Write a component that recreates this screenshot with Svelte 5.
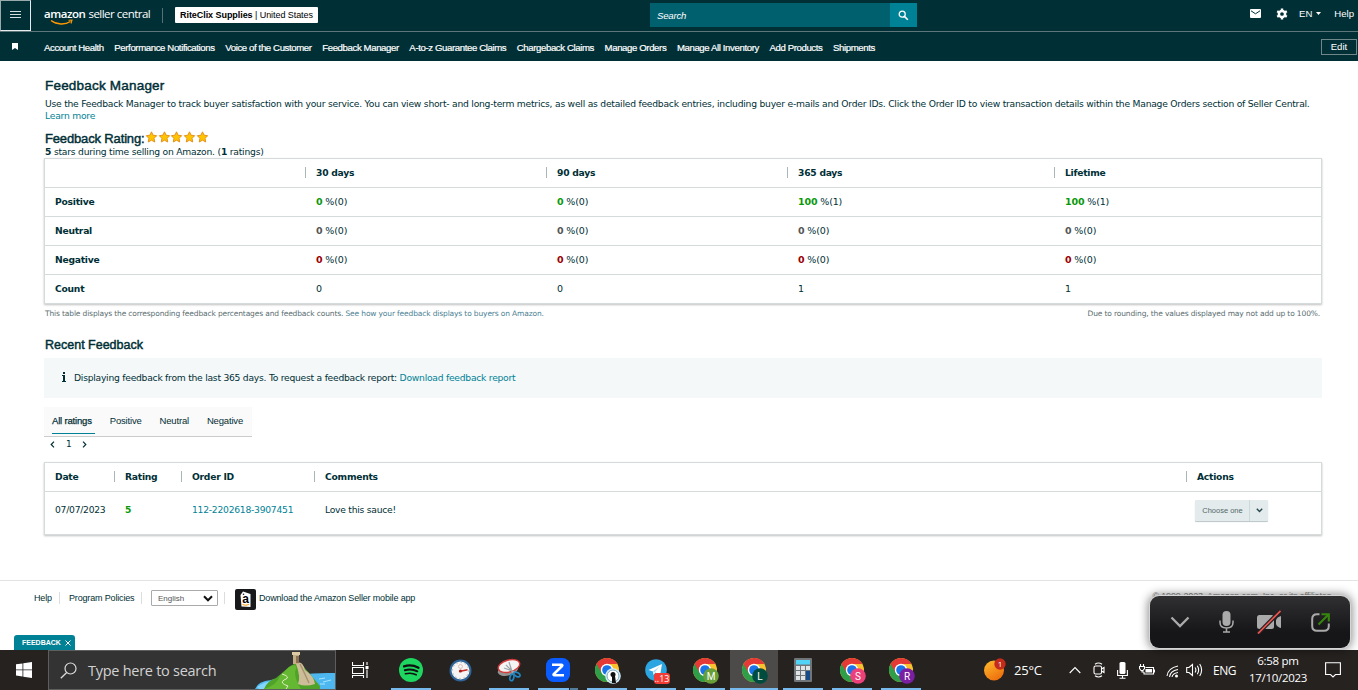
<script lang="ts">
	type Metric = { label: string; tone: string; values: [string, string][] };

	const quickLinks = [
		'Account Health',
		'Performance Notifications',
		'Voice of the Customer',
		'Feedback Manager',
		'A-to-z Guarantee Claims',
		'Chargeback Claims',
		'Manage Orders',
		'Manage All Inventory',
		'Add Products',
		'Shipments'
	];

	const periods = ['30 days', '90 days', '365 days', 'Lifetime'];

	const metrics: Metric[] = [
		{ label: 'Positive', tone: 'good', values: [['0', '0'], ['0', '0'], ['100', '1'], ['100', '1']] },
		{ label: 'Neutral', tone: 'flat', values: [['0', '0'], ['0', '0'], ['0', '0'], ['0', '0']] },
		{ label: 'Negative', tone: 'bad', values: [['0', '0'], ['0', '0'], ['0', '0'], ['0', '0']] }
	];
	const counts = [0, 0, 1, 1];

	const tabs = ['All ratings', 'Positive', 'Neutral', 'Negative'];
	let activeTab = $state('All ratings');

	// Taskbar buttons, left to right
	const apps = [
		{ kind: 'tasks', open: false },
		{ kind: 'spotify', open: true },
		{ kind: 'clock', open: false },
		{ kind: 'snip', open: true },
		{ kind: 'zoom', open: true, stacked: true },
		{ kind: 'chrome', open: true, badge: '', color: '#d7eef7' },
		{ kind: 'telegram', open: true },
		{ kind: 'chrome', open: true, badge: 'M', color: '#689f38' },
		{ kind: 'chrome', open: true, badge: 'L', color: '#004d40', active: true },
		{ kind: 'calc', open: true },
		{ kind: 'chrome', open: true, badge: 'S', color: '#ec407a' },
		{ kind: 'chrome', open: true, badge: 'R', color: '#7b1fa2' }
	];
</script>

{#snippet chrome(badge: string, color: string)}
	<svg width="30" height="28" viewBox="0 0 30 28">
		<circle cx="13" cy="13" r="12" fill="#fbc02d" />
		<path d="M2.6 7A12 12 0 0 0 13 25L18.2 16L13 13Z" fill="#2e9e48" />
		<path d="M2.6 7A12 12 0 0 1 23.4 7H13L7.8 16Z" fill="#e53935" />
		<circle cx="13" cy="13" r="6.2" fill="#fff" />
		<circle cx="13" cy="13" r="4.8" fill="#1a73e8" />
		<circle cx="19" cy="19" r="7.800" fill={color} />
		{#if badge}
			<text x="19" y="22.500" text-anchor="middle" class="badge-letter">{badge}</text>
		{:else}
			<circle cx="19" cy="19" r="6" fill="#fff" stroke="#78aabb" />
			<circle cx="19" cy="17.500" r="2.500" fill="#111" />
			<path d="M18 19h3l1 7h-4z" fill="#111" />
		{/if}
	</svg>
{/snippet}

<div class="screen">
	<header>
		<div class="topbar">
			<button class="menu" aria-label="Menu">
				<svg width="11" height="8" viewBox="0 0 11 8">
					<path d="M0 1.500h11M0 4.500h11M0 7.500h11" stroke="#d5dfe0" stroke-width="1" />
				</svg>
			</button>
			<div class="logo">
				<b>amazon</b><span>seller central</span>
				<svg class="smile" width="24" height="7" viewBox="0 0 24 7">
					<path d="M1 1.500C7 6 15 6 20.500 2.500" fill="none" stroke="#f90" stroke-width="1.400" />
					<path d="M18.500 1.200L22 1L21 4.500" fill="none" stroke="#f90" stroke-width="1.100" />
				</svg>
			</div>
			<div class="account"><b>RiteClix Supplies</b> | United States</div>
			<div class="search">
				<span>Search</span>
				<button aria-label="Search">
					<svg width="11" height="11" viewBox="0 0 11 11">
						<circle cx="4.200" cy="4.200" r="3" fill="none" stroke="#fff" stroke-width="1.300" />
						<path d="M6.400 6.400L9.800 9.800" stroke="#fff" stroke-width="1.600" />
					</svg>
				</button>
			</div>
			<div class="tools">
				<svg width="11" height="9" viewBox="0 0 11 9">
					<rect width="11" height="9" rx="1" fill="#fff" />
					<path d="M1 1.800L5.500 4.800L10 1.800" fill="none" stroke="#002f36" />
				</svg>
				<svg class="gear" width="12" height="12" viewBox="0 0 12 12">
					<circle cx="6" cy="6" r="3.100" fill="none" stroke="#fff" stroke-width="2.500" />
					<path
						d="M6 .5V3M6 9v2.500M1.200 3.200L3.400 4.500M8.600 7.500l2.200 1.300M1.200 8.800L3.400 7.500M8.600 4.500l2.200-1.300"
						stroke="#fff"
						stroke-width="2.400"
					/>
				</svg>
				<span class="lang">EN</span>
				<svg class="caret" width="5" height="3" viewBox="0 0 5 3"><path d="M0 0h5L2.500 3z" fill="#fff" /></svg>
				<span class="help">Help</span>
			</div>
		</div>
		<nav>
			<svg class="bookmark" width="6" height="7" viewBox="0 0 6 7"><path d="M0 0h6v7L3 5L0 7z" fill="#fff" /></svg>
			<div class="links">
				{#each quickLinks as link}
					<span>{link}</span>
				{/each}
			</div>
			<button class="edit">Edit</button>
		</nav>
	</header>

	<main>
		<h1>Feedback Manager</h1>
		<p class="intro">
			<span>Use the Feedback Manager to track buyer satisfaction with your service. You can view short- and long-term metrics, as well as detailed feedback entries, including buyer e-mails and Order IDs. Click the Order ID to view transaction details within the Manage Orders section of Seller Central.</span>
			<a href="#learn">Learn more</a>
		</p>
		<div class="rating">
			<h2>Feedback Rating:</h2>
			{#each Array(5) as _}
				<svg width="12.700" height="12" viewBox="0 0 12.700 12">
					<path
						d="M6.500 .8L8.100 4.200L11.700 4.700L9.100 7.300L9.700 11L6.500 9.200L3.300 11L3.900 7.300L1.300 4.700L4.900 4.200Z"
						fill="#ffc400"
						stroke="#e18a13"
						stroke-width=".9"
					/>
				</svg>
			{/each}
		</div>
		<p class="summary"><b>5</b> stars during time selling on Amazon. (<b>1</b> ratings)</p>

		<div class="table metrics">
			<div class="row head">
				<span></span>
				{#each periods as period}
					<span class="split">{period}</span>
				{/each}
			</div>
			{#each metrics as metric}
				<div class="row">
					<b>{metric.label}</b>
					{#each metric.values as [percent, count]}
						<span class="cell"><b class={metric.tone}>{percent}</b> %({count})</span>
					{/each}
				</div>
			{/each}
			<div class="row">
				<b>Count</b>
				{#each counts as count}
					<span class="cell">{count}</span>
				{/each}
			</div>
		</div>
		<div class="notes">
			<span>This table displays the corresponding feedback percentages and feedback counts. <a href="#display">See how your feedback displays to buyers on Amazon.</a></span>
			<span>Due to rounding, the values displayed may not add up to 100%.</span>
		</div>

		<h2 class="recent">Recent Feedback</h2>
		<div class="info">
			<svg width="4" height="10" viewBox="0 0 4 10">
				<path d="M1 0h2v2H1zM0 3h3v6h1v1H0V9h1V4H0z" fill="#002f36" />
			</svg>
			<span>Displaying feedback from the last 365 days. To request a feedback report: <a href="#report">Download feedback report</a></span>
		</div>

		<div class="tabs">
			{#each tabs as tab}
				<button class:active={tab === activeTab} onclick={() => (activeTab = tab)}>{tab}</button>
			{/each}
		</div>
		<div class="pager">
			<svg width="5" height="7" viewBox="0 0 5 7"><path d="M4 .7L1.200 3.500L4 6.300" fill="none" stroke="#002f36" stroke-width="1.200" /></svg>
			<span>1</span>
			<svg width="5" height="7" viewBox="0 0 5 7"><path d="M1 .7L3.800 3.500L1 6.300" fill="none" stroke="#002f36" stroke-width="1.200" /></svg>
		</div>

		<div class="table entries">
			<div class="row head">
				<span>Date</span>
				<span class="split">Rating</span>
				<span class="split">Order ID</span>
				<span class="split">Comments</span>
				<span class="split">Actions</span>
			</div>
			<div class="row entry">
				<span>07/07/2023</span>
				<span class="cell"><b class="good">5</b></span>
				<span class="cell"><a href="#order">112-2202618-3907451</a></span>
				<span class="cell">Love this sauce!</span>
				<div class="cell">
					<button class="choose">
						<span>Choose one</span>
						<i><svg width="7" height="5" viewBox="0 0 7 5"><path d="M.8 .8L3.500 3.600L6.200 .8" fill="none" stroke="#24474d" stroke-width="1.400" /></svg></i>
					</button>
				</div>
			</div>
		</div>
	</main>

	<footer>
		<span class="f-help">Help</span>
		<span class="f-policy">Program Policies</span>
		<div class="f-lang">
			<div class="select">
				English
				<svg width="10" height="7" viewBox="0 0 10 7"><path d="M1 1.300L5 5.300L9 1.300" fill="none" stroke="#111" stroke-width="2" /></svg>
			</div>
		</div>
		<div class="f-app">
			<svg width="21" height="21" viewBox="0 0 21 21">
				<rect width="21" height="21" rx="2" fill="#17191a" />
				<path d="M5.500 6L8 2.500L15.500 5V18L6.500 17.500Z" fill="#fff" />
				<circle cx="8.500" cy="5.200" r=".8" fill="#17191a" />
				<text x="10.500" y="14" text-anchor="middle" class="app-letter">a</text>
				<path d="M7.500 15.500Q10.500 17 14 15.500" fill="none" stroke="#f90" />
			</svg>
			<span>Download the Amazon Seller mobile app</span>
		</div>
		<small>© 1999-2023, Amazon.com, Inc. or its affiliates</small>
	</footer>
	<div class="feedback-tab">
		<b>FEEDBACK</b>
		<svg width="6" height="6" viewBox="0 0 6 6"><path d="M.5 .5l5 5M5.500 .5l-5 5" stroke="#fff" /></svg>
	</div>

	<div class="taskbar">
		<div class="start">
			<svg width="16" height="16" viewBox="0 0 16 16">
				<path d="M0 2.300L6.500 1.400V7.500H0zM7.300 1.300L16 0V7.500H7.300zM0 8.300H6.500V14.500L0 13.600zM7.300 8.300H16V16L7.300 14.700z" fill="#fff" />
			</svg>
		</div>
		<div class="winsearch">
			<svg width="17" height="17" viewBox="0 0 17 17">
				<circle cx="10.500" cy="6.500" r="5.500" fill="none" stroke="#ddd" stroke-width="1.200" />
				<path d="M6.700 10.500L.8 16.200" stroke="#ddd" stroke-width="1.300" />
			</svg>
			<span>Type here to search</span>
			<svg class="island" width="80" height="37" viewBox="0 0 80 37">
				<path d="M0 37Q3 29 16 28Q46 20 80 21V37Z" fill="#4db8f0" />
				<path d="M2 35Q9 29 20 29L30 37H4Z" fill="#82d5fb" />
				<path d="M9 37Q12 29 21 26L34 15Q41 9 47 13L55 22L65 34V37Z" fill="#50a328" />
				<path d="M9 37Q22 33 25 24L34 15Q44 10 40 20Q40 28 46 37Z" fill="#65b831" />
				<path d="M41 12Q47 7 50 18Q59 24 60 32Q50 35 43 32Q46 25 41 12Z" fill="#cdbd99" />
				<path d="M45 12Q49 20 54 31" fill="none" stroke="#a79470" stroke-width="1.500" />
				<path d="M38 2h6v10h-6z" fill="#c4ae86" />
				<path d="M37 0h8v3h-8z" fill="#ddc9a3" />
				<path d="M41 4v7h3V4z" fill="#8b7152" />
				<path d="M27 22Q37 25 29 28Q24 31 33 34L31 37" fill="none" stroke="#e6edc7" stroke-width="1" />
				<path d="M64 27l6-1M68 30l8-2M65 32h5" stroke="#a8e4ff" />
			</svg>
		</div>
		<div class="apps">
			{#each apps as app}
				<div class={['app', app.kind]} class:open={app.open} class:active={app.active} class:stacked={app.stacked}>
					{#if app.kind === 'tasks'}
						<svg width="17" height="16" viewBox="0 0 17 16">
							<path d="M.5 0V3.500H11.500V0M.5 5.500H11.500V11.500H.5zM.5 16V13.500H11.500V16M15 0V3M15 7.500V16" fill="none" stroke="#fff" stroke-width="1.100" />
							<rect x="13.500" y="4" width="3" height="3" fill="#fff" />
						</svg>
					{:else if app.kind === 'spotify'}
						<svg width="24" height="24" viewBox="0 0 24 24">
							<circle cx="12" cy="12" r="12" fill="#1ed760" />
							<path d="M5 8.300Q12.500 6 19.500 9.700" stroke-width="2.300" class="wave" />
							<path d="M5.800 12.200Q12.500 10.300 18.300 13.300" stroke-width="2" class="wave" />
							<path d="M6.400 15.800Q12.500 14.200 17.200 16.800" stroke-width="1.600" class="wave" />
						</svg>
					{:else if app.kind === 'clock'}
						<svg width="23" height="23" viewBox="0 0 23 23">
							<circle cx="11.500" cy="11.500" r="10" fill="#f5f5f3" stroke="#2e6498" stroke-width="2" />
							<circle cx="11.500" cy="11.500" r="8" fill="none" stroke="#999" stroke-width="1" stroke-dasharray="1 3.190" />
							<circle cx="11.500" cy="7.500" r="2" fill="none" stroke="#d5aaa5" stroke-width=".7" />
							<path d="M10 12.500L18.500 10.800" stroke="#c62d24" stroke-width="1.400" />
							<circle cx="11.500" cy="12" r="1.500" fill="#a71f1f" />
						</svg>
					{:else if app.kind === 'snip'}
						<svg width="24" height="24" viewBox="0 0 24 24">
							<ellipse cx="11" cy="12" rx="10.500" ry="5.500" fill="#929292" transform="rotate(-15 11 12)" />
							<ellipse cx="12" cy="8" rx="11" ry="6" fill="#f4f4f4" stroke="#d63b3b" stroke-width="1.400" transform="rotate(-15 12 8)" />
							<path d="M12 4L15.500 15M7 10L18 14M9 7L14 12" stroke="#9da5ab" stroke-width="1.200" />
							<ellipse cx="15" cy="19.500" rx="1.900" ry="3.300" fill="none" stroke="#2285bf" stroke-width="1.700" transform="rotate(15 15 19)" />
							<ellipse cx="20" cy="16.500" rx="1.900" ry="3.300" fill="none" stroke="#2285bf" stroke-width="1.700" transform="rotate(-60 20 16.500)" />
						</svg>
					{:else if app.kind === 'zoom'}
						<svg width="24" height="24" viewBox="0 0 24 24">
							<rect width="24" height="24" rx="7.500" fill="#0b5cff" />
							<path d="M6 6.800H15.500Q17 7 15.800 8.300L7.800 16Q7 17.200 8.500 17.200H18" fill="none" stroke="#fff" stroke-width="2.600" />
						</svg>
					{:else if app.kind === 'telegram'}
						<svg width="27" height="27" viewBox="0 0 27 27">
							<circle cx="12" cy="12" r="10.800" fill="#2ca5e0" />
							<path d="M4.500 12L18 6L16 18L11.500 14.500L9.500 17L9 13.500Z" fill="#fff" />
							<path d="M9 13.500L15.500 8.500L10.500 14.500" fill="#a9d6ed" />
							<rect x="10" y="15" width="16" height="11" rx="3" fill="#f23c34" />
							<text x="18" y="24" text-anchor="middle" class="unread">..13</text>
						</svg>
					{:else if app.kind === 'calc'}
						<svg width="18" height="24" viewBox="0 0 18 24">
							<rect width="18" height="24" rx="1" fill="#6f7579" />
							<rect x="2" y="2" width="14" height="4.500" fill="#51d3f5" />
							<path d="M2 8h4v4H2zM7 8h4v4H7zM12 8h4v4h-4zM2 13h4v4H2zM7 13h4v4H7zM2 18h4v4H2zM7 18h4v4H7z" fill="#e1e4e5" />
							<rect x="12" y="13" width="4" height="9" fill="#174a87" />
						</svg>
					{:else}
						{@render chrome(app.badge ?? '', app.color ?? '')}
					{/if}
				</div>
			{/each}
		</div>
		<div class="tray">
			<svg class="weather" width="22" height="23" viewBox="0 0 22 23">
				<defs>
					<linearGradient id="sun" x1="0" y1="0" x2="0.600" y2="1">
						<stop offset="0" stop-color="#ffbd2f" />
						<stop offset="1" stop-color="#ee700d" />
					</linearGradient>
				</defs>
				<circle cx="10" cy="12.500" r="10" fill="url(#sun)" />
				<circle cx="16" cy="6" r="5.700" fill="#c42b1c" />
				<text x="16" y="9" text-anchor="middle" class="alert">1</text>
			</svg>
			<span class="temp">25°C</span>
			<svg class="t-up" width="12" height="8" viewBox="0 0 12 8"><path d="M.7 7L6 1.500L11.300 7" class="line" /></svg>
			<svg class="t-meet" width="12" height="16" viewBox="0 0 12 16">
				<rect x="1" y="4" width="7.500" height="8" rx="1.500" class="line" />
				<path d="M8.500 7L11 5.500v5L8.500 9M2 2.200Q5.500 -.3 9 2.200M2 13.800Q5.500 16.300 9 13.800" class="line" />
			</svg>
			<svg class="t-mic" width="11" height="17" viewBox="0 0 11 17">
				<rect x="2.500" y="0" width="6" height="12" rx="1.500" fill="#fff" />
				<path d="M.6 8v5.500h9.800V8M5.500 13.500V16M2.500 16.300h6" class="line" />
			</svg>
			<svg class="t-bat" width="16" height="12" viewBox="0 0 16 12">
				<path d="M6.500 3.500H14.500V10H5V8M15.500 5.500v3M1.500 0v2.500M4.500 0v2.500M.5 2.500h5v2L4 6.500H2L.5 4.500zM3 6.500V8h2" class="line" />
				<rect x="6.500" y="5" width="6.500" height="3.500" fill="#fff" />
			</svg>
			<svg class="t-net" width="13" height="13" viewBox="0 0 13 13">
				<path d="M1 11Q2 3 12 1M3.500 12Q4 6 12 4.500M6 12Q6.500 8.500 12 7.500" class="line" />
				<circle cx="10.500" cy="11" r="1.500" fill="#fff" />
			</svg>
			<svg class="t-vol" width="17" height="14" viewBox="0 0 17 14">
				<path d="M.7 4.500H3L6.500 1.500v11L3 9.500H.7zM9 4.500Q10.800 7 9 9.500M11.300 2.800Q14 7 11.300 11.200M13.700 1Q17.500 7 13.700 13" class="line" />
			</svg>
			<span class="eng">ENG</span>
			<div class="time"><span>6:58 pm</span><span>17/10/2023</span></div>
			<svg width="16" height="16" viewBox="0 0 16 16">
				<path d="M.6 .8H15.400V12.500H10.500L8 15L5.500 12.500H.6Z" class="line" />
			</svg>
		</div>
	</div>

	<!-- floating call controls -->
	<div class="call">
		<svg width="20" height="12" viewBox="0 0 20 12"><path d="M1.500 1.500L10 10L18.500 1.500" fill="none" stroke="#aaa" stroke-width="2.300" /></svg>
		<svg class="c-mic" width="15" height="22" viewBox="0 0 15 22">
			<rect x="3.500" width="8" height="15" rx="4" fill="#aaa" />
			<path d="M1 9.500v2Q1 17 7.500 17T14 11.500v-2M7.500 17v4M4 21h7" fill="none" stroke="#aaa" stroke-width="1.500" />
		</svg>
		<svg class="c-cam" width="25" height="24" viewBox="0 0 25 24">
			<rect x="0" y="5" width="17" height="14" rx="2.500" fill="#aaa" />
			<path d="M19 10Q20 7 24 6V18Q20 17 19 14Z" fill="#aaa" />
			<path d="M1 23.500L23.500 .8" stroke="#222" stroke-width="4" />
			<path d="M1 23.500L23.500 .8" stroke="#ef5350" stroke-width="1.700" />
		</svg>
		<svg class="c-share" width="19" height="19" viewBox="0 0 19 19">
			<path d="M8.500 1.200H6Q1.200 1.200 1.200 6V13Q1.200 17.800 6 17.800H13Q17.800 17.800 17.800 13V10.500" fill="none" stroke="#aaa" stroke-width="2" />
			<path d="M7.500 11.500L17 2M10.500 1.200H17.800V8.500" fill="none" stroke="#36860d" stroke-width="2.100" />
		</svg>
	</div>
</div>

<style>
	:global(body) {
		background: #fff;
		overflow: hidden;
	}

	.screen {
		position: relative;
		display: flex;
		flex-direction: column;
		height: 690px;
		color: #002f36;
		font-family: 'DejaVu Sans', sans-serif;
		font-size: 9.2px;
	}

	svg {
		display: block;
		flex: none;
	}

	button {
		padding: 0;
		border: 0;
		background: none;
		color: inherit;
		font: inherit;
		letter-spacing: inherit;
	}

	a {
		color: #008296;
		text-decoration: none;
	}

	h1,
	h2,
	p {
		margin: 0;
	}

	header,
	footer,
	.tabs,
	h1,
	h2 {
		font-family: 'Liberation Sans', Arial, sans-serif;
	}

	header {
		height: 61px;
		background: #002f36;
		color: #fff;
		font-size: 9.6px;
	}

	.topbar {
		display: flex;
		align-items: center;
		box-sizing: border-box;
		height: 32px;
		border-bottom: 1px solid #5d7679;
		padding-bottom: 1px;
	}

	.topbar > * {
		flex: none;
	}

	.menu {
		display: grid;
		place-items: center;
		box-sizing: border-box;
		width: 31px;
		height: 31px;
		padding-bottom: 2px;
		border: 1px solid #e6eced;
		border-left-color: #9aaaac;
		border-top-color: #9aaaac;
	}

	.logo {
		position: relative;
		display: flex;
		gap: 3px;
		box-sizing: border-box;
		width: 119px;
		height: 15px;
		margin-left: 13px;
		border-right: 1px solid #567074;
		font: 11.5px/12px 'Open Sans', sans-serif;
		letter-spacing: -0.52px;
		white-space: nowrap;
	}

	.logo b {
		font-weight: 600;
		letter-spacing: -0.45px;
	}

	.smile {
		position: absolute;
		left: 6px;
		top: 11px;
	}

	.account {
		box-sizing: border-box;
		width: 143px;
		height: 16px;
		margin-left: 12px;
		border-radius: 1px;
		background: #fff;
		color: #000;
		text-align: center;
		font-size: 9px;
		line-height: 16px;
		letter-spacing: -0.06px;
		white-space: nowrap;
	}

	.search {
		display: flex;
		align-items: center;
		justify-content: space-between;
		width: 267px;
		height: 24px;
		margin-left: 332px;
		background: #00606e;
		font-style: italic;
	}

	.search span {
		padding-left: 7px;
		letter-spacing: -0.2px;
	}

	.search button {
		display: grid;
		place-items: center;
		width: 27px;
		height: 24px;
		background: #008296;
	}

	.tools {
		display: flex;
		align-items: center;
		margin: -3px 0 0 333px;
	}

	.gear {
		margin-left: 15px;
	}

	.lang {
		margin-left: 11px;
	}

	.caret {
		margin-left: 4px;
	}

	.help {
		margin-left: 13px;
	}

	nav {
		display: flex;
		align-items: center;
		height: 29px;
	}

	.bookmark {
		margin: -1px 26px 0 12px;
	}

	.links {
		display: flex;
		justify-content: space-between;
		width: 831px;
		margin-top: 2px;
		letter-spacing: -0.38px;
		white-space: nowrap;
		-webkit-text-stroke: 0.2px #fff;
	}

	.edit {
		box-sizing: border-box;
		width: 36px;
		height: 16px;
		margin: 1px 1px 0 auto;
		padding-bottom: 1px;
		border: 1px solid #70878a;
	}

	main {
		display: flex;
		flex-direction: column;
		box-sizing: border-box;
		height: 519px;
		padding: 17px 36px 0 44px;
		letter-spacing: -0.25px;
	}

	h1,
	h2 {
		padding-left: 1px;
		font-size: 13px;
		font-weight: 400;
		line-height: 16px;
		letter-spacing: -0.15px;
		-webkit-text-stroke: 0.45px #002f36;
	}

	h1 {
		font-size: 13.5px;
		letter-spacing: 0.2px;
	}

	.intro {
		height: 24px;
		margin-top: 4px;
		padding-left: 1px;
		line-height: 12px;
		letter-spacing: -0.233px;
		white-space: nowrap;
	}

	.intro a {
		display: block;
	}

	.rating {
		display: flex;
		align-items: center;
		height: 14px;
		margin-top: 9px;
	}

	.rating h2 {
		width: 100px;
		padding-top: 2px;
		white-space: nowrap;
	}

	.rating svg {
		margin-top: -2px;
	}

	.summary {
		height: 12px;
		margin-top: 1px;
		padding-left: 1px;
		line-height: 12px;
		letter-spacing: -0.22px;
	}

	.table {
		box-sizing: border-box;
		border: 1px solid #d5dbdb;
		box-shadow: 0 1px 2px rgba(0, 0, 0, 0.25);
	}

	.row {
		display: grid;
		align-items: center;
		box-sizing: border-box;
		height: 29px;
		padding: 0 0 2px 10px;
		border-bottom: 1px solid #d5dbdb;
	}

	.row:last-child {
		border-bottom: 0;
	}

	.head {
		font-weight: 700;
	}

	.split {
		padding-left: 10px;
		border-left: 1px solid #aab7b8;
		line-height: 11px;
	}

	.cell {
		padding-left: 11px;
	}

	.metrics {
		height: 146px;
	}

	.metrics .row {
		grid-template-columns: 250px 241px 241px 267px 1fr;
	}

	.metrics .cell {
		font-size: 9.5px;
		letter-spacing: -0.15px;
	}

	.good {
		color: #0a980a;
	}

	.flat {
		color: #555;
	}

	.bad {
		color: #900;
	}

	.notes {
		display: flex;
		justify-content: space-between;
		height: 10px;
		margin-top: 5px;
		padding: 0 2px 0 1px;
		color: #596d70;
		font-size: 7.5px;
		line-height: 10px;
		letter-spacing: -0.14px;
	}

	.notes a {
		color: #4c8294;
	}

	.recent {
		margin-top: 18px;
		font-size: 12.5px;
		letter-spacing: 0;
	}

	.info {
		display: flex;
		flex: none;
		align-items: center;
		gap: 8px;
		box-sizing: border-box;
		height: 40px;
		margin-top: 5px;
		padding: 0 0 2px 18px;
		background: #f4f8f9;
	}

	.tabs {
		display: flex;
		flex: none;
		gap: 15px;
		box-sizing: border-box;
		width: 208px;
		height: 30px;
		margin-top: 9px;
		padding-left: 8px;
		border-bottom: 1px solid #ccc;
		background: #fafafa;
		font-size: 9.5px;
		letter-spacing: -0.18px;
		white-space: nowrap;
	}

	.tabs button {
		height: 27px;
		padding-right: 3px;
		box-sizing: border-box;
		border-bottom: 1px solid transparent;
	}

	.tabs .active {
		border-bottom-color: #008296;
		-webkit-text-stroke: 0.25px #002f36;
	}

	.pager {
		display: flex;
		align-items: center;
		gap: 11px;
		height: 14px;
		padding-left: 6px;
		font-size: 9px;
	}

	.entries {
		height: 73px;
		margin-top: 11px;
	}

	.entries .row {
		grid-template-columns: 59px 67px 133px 872px 1fr;
	}

	.entries .entry {
		height: 42px;
		padding-bottom: 7px;
	}

	.choose {
		display: flex;
		align-items: center;
		width: 73px;
		height: 21px;
		margin: 2px 0 0 -2px;
		border-radius: 1px;
		background: #e3ebec;
		box-shadow: 0 1px 1px #bbc5c6;
		color: #52686b;
		font: 7.5px 'Liberation Sans', sans-serif;
		letter-spacing: 0;
	}

	.choose span {
		flex: 1;
		padding-left: 1px;
	}

	.choose i {
		display: grid;
		place-items: center;
		width: 18px;
		height: 21px;
		border-left: 1px solid #cdd8d9;
	}

	footer {
		display: flex;
		box-sizing: border-box;
		height: 55px;
		padding-left: 34px;
		border-top: 1px solid #e3e3e3;
		font-size: 9px;
		letter-spacing: -0.16px;
		white-space: nowrap;
	}

	footer > * {
		flex: none;
		box-sizing: border-box;
		height: 12px;
		margin-top: 11px;
		line-height: 12px;
	}

	.f-help {
		width: 26px;
		border-right: 1px solid #ddd;
	}

	.f-policy {
		width: 82px;
		padding-left: 9px;
		border-right: 1px solid #ddd;
	}

	.f-lang {
		width: 83px;
		padding-left: 9px;
		border-right: 1px solid #ddd;
	}

	.select {
		display: flex;
		align-items: center;
		justify-content: space-between;
		box-sizing: border-box;
		width: 67px;
		height: 16px;
		margin-top: -2px;
		padding: 1px 4px 0 6px;
		border: 1px solid #aaa;
		border-radius: 1px;
		color: #555;
		font-size: 8px;
		letter-spacing: 0;
	}

	.f-app {
		display: flex;
		gap: 3px;
		padding-left: 10px;
	}

	.f-app svg {
		margin-top: -3px;
	}

	.app-letter {
		font: bold 12px 'Liberation Sans', sans-serif;
	}

	small {
		margin: 9px 27px 0 auto;
		color: #888;
		font-size: 9px;
	}

	.feedback-tab {
		display: flex;
		align-items: center;
		gap: 4px;
		box-sizing: border-box;
		width: 61px;
		height: 15px;
		margin-left: 14px;
		padding-left: 8px;
		border-radius: 3px 3px 0 0;
		background: #008296;
		color: #fff;
		font: 7px 'Liberation Sans', sans-serif;
	}

	.taskbar {
		display: flex;
		height: 40px;
		background: #252220;
		color: #fff;
		font-family: 'Open Sans', sans-serif;
	}

	.start {
		display: grid;
		flex: none;
		place-items: center;
		width: 48px;
	}

	.winsearch {
		display: flex;
		flex: none;
		align-items: center;
		gap: 11px;
		box-sizing: border-box;
		width: 288px;
		padding-left: 11px;
		border: 1px solid #5e5e5e;
		background: #333;
		color: #d2d2d2;
		font-size: 14.5px;
		letter-spacing: -0.27px;
		white-space: nowrap;
	}

	.island {
		align-self: flex-end;
		margin-left: auto;
	}

	.apps {
		display: flex;
		flex: none;
		gap: 1px;
	}

	.app {
		position: relative;
		display: grid;
		place-items: center;
		width: 48px;
		height: 40px;
	}

	.app.tasks {
		box-sizing: border-box;
		width: 50px;
		padding-right: 2px;
	}

	.app.active {
		background: #4c4b4a;
	}

	.app.open::after {
		content: '';
		position: absolute;
		right: 4px;
		bottom: 0;
		left: 4px;
		height: 2px;
		background: #76b9ed;
	}

	.app.active::after {
		right: 0;
		left: 0;
	}

	.app.stacked::after {
		right: 4px;
		background: linear-gradient(90deg, #76b9ed 31px, #252220 31px 32px, #547c9c 32px);
	}

	.chrome svg {
		margin: 2px 0 0 4px;
	}

	.telegram svg {
		margin: 2px 0 0 3px;
	}

	.wave {
		fill: none;
		stroke: #111;
		stroke-linecap: round;
	}

	.badge-letter {
		fill: #fff;
		font: 10px Roboto, sans-serif;
	}

	.unread {
		fill: #fff;
		font: 9px 'Open Sans', sans-serif;
	}

	.alert {
		fill: #fff;
		font: 8px 'Open Sans', sans-serif;
	}

	.tray {
		display: flex;
		flex: 1;
		align-items: center;
		justify-content: flex-end;
		min-width: 0;
		padding-right: 17px;
		font-size: 12px;
		white-space: nowrap;
	}

	.line {
		fill: none;
		stroke: #fff;
		stroke-width: 1.1;
	}

	.weather {
		margin: -2px 8px 0 0;
	}

	.temp {
		width: 30px;
		margin-right: 25px;
		font-size: 13px;
		letter-spacing: -0.2px;
	}

	.t-up {
		margin-right: 12px;
	}

	.t-meet {
		margin-right: 12px;
	}

	.t-mic {
		margin-right: 11px;
	}

	.t-bat {
		margin-right: 11px;
	}

	.t-net {
		margin: 2px 7px 0 0;
	}

	.t-vol {
		margin-right: 10px;
	}

	.eng {
		width: 24px;
		margin-right: 12px;
		letter-spacing: -0.5px;
	}

	.time {
		display: flex;
		flex-direction: column;
		align-items: center;
		width: 58px;
		margin: -2px 18px 0 0;
		font-size: 11.5px;
		line-height: 17.5px;
		letter-spacing: -0.3px;
	}

	.call {
		position: absolute;
		left: 1150px;
		top: 596px;
		display: flex;
		align-items: center;
		box-sizing: border-box;
		width: 200px;
		height: 52px;
		padding-left: 20px;
		border-radius: 9px;
		background: linear-gradient(#303032, #161618 70%);
		box-shadow: 0 0 0 1px #d5d5d5, 0 0 10px 2px rgba(0, 0, 0, 0.45);
	}

	.c-mic {
		margin-left: 29px;
	}

	.c-cam {
		margin-left: 23px;
	}

	.c-share {
		margin-left: 29px;
	}
</style>
